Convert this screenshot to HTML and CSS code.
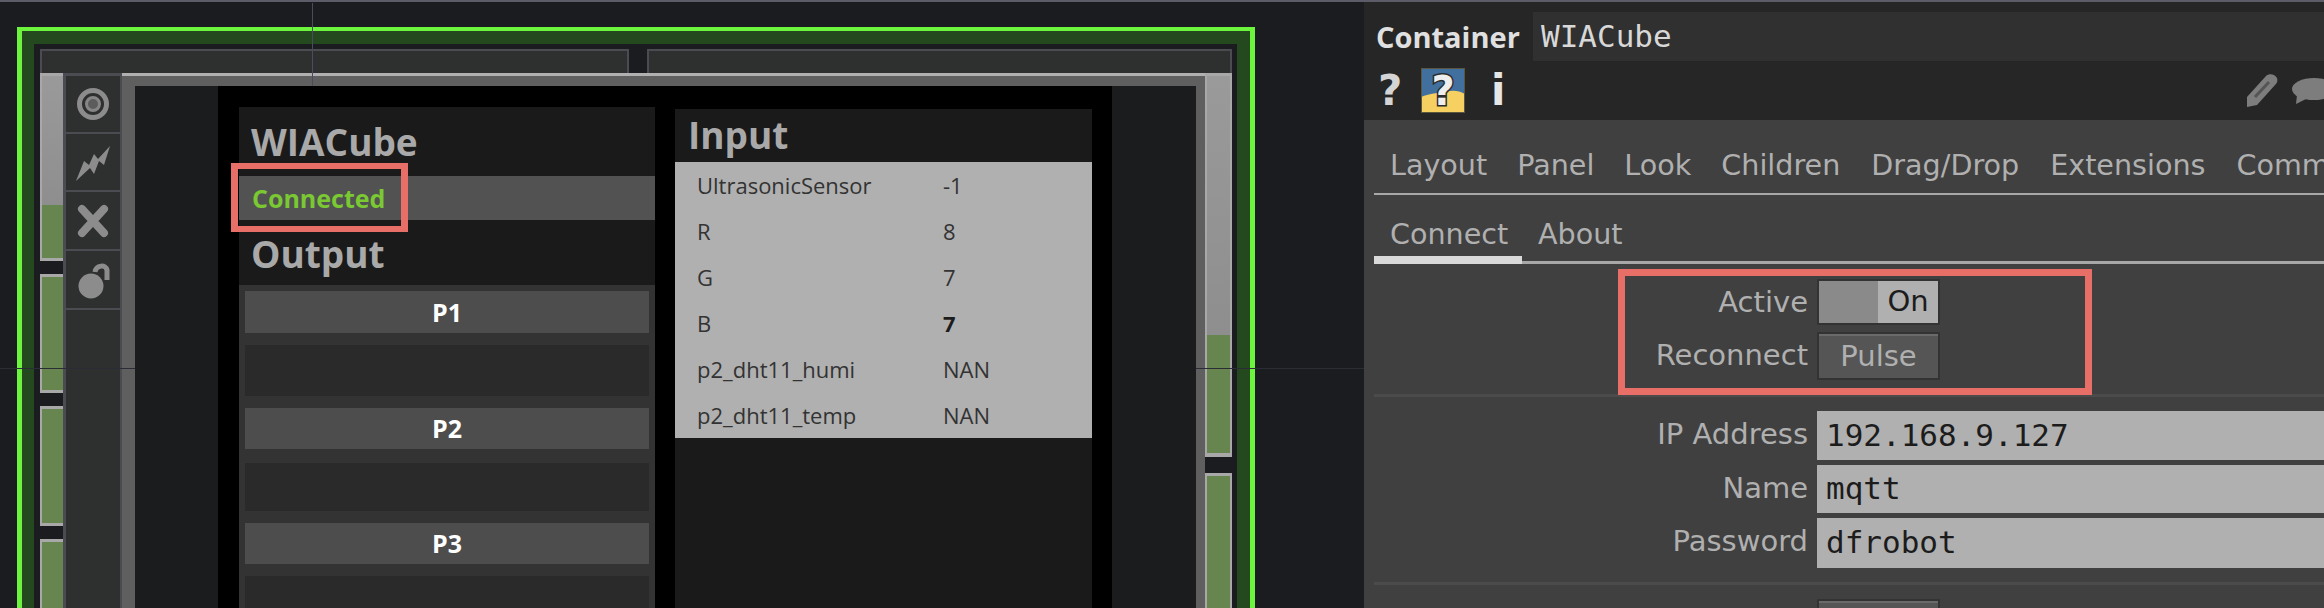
FILE: index.html
```html
<!DOCTYPE html>
<html>
<head>
    <meta charset="utf-8">
    <link rel="stylesheet" href="styles.css">
</head>
<body>
    <div class="page">
        <div class="canvas">
            <div class="frame">
                <div class="frame-inner">
                    <div class="top-row">
                        <div class="top-box top-box-left"></div>
                        <div class="top-box"></div>
                    </div>
                    <div class="main-row">
                        <div class="strip strip-left">
                            <div class="seg seg-first">
                                <div class="seg-grey"></div>
                                <div class="seg-green"></div>
                            </div>
                            <div class="seg seg-second"><div class="seg-green"></div></div>
                            <div class="seg seg-third"><div class="seg-green"></div></div>
                            <div class="seg seg-last"><div class="seg-green"></div></div>
                        </div>

                        <div class="tool-col">
                            <div class="tool tool-a">
                                <svg width="40" height="40" viewBox="0 0 40 40">
                                    <circle cx="20" cy="20" r="13.5" fill="none" stroke="#8c8c8c" stroke-width="5"/>
                                    <circle cx="20" cy="20" r="6.5" fill="#5c5c5c" stroke="#868686" stroke-width="3"/>
                                </svg>
                            </div>
                            <div class="tool tool-a">
                                <svg width="40" height="40" viewBox="0 0 40 40">
                                    <path d="M37 4 L31 23 L26 19 L21 32 L17 26 L3 39 L11 19 L16 23 L21 12 L25 17 Z" fill="#8c8c8c"/>
                                </svg>
                            </div>
                            <div class="tool tool-b">
                                <svg width="40" height="40" viewBox="0 0 40 40">
                                    <path d="M9 8 L31 32 M31 8 L9 32" fill="none" stroke="#8c8c8c" stroke-width="8" stroke-linecap="round"/>
                                </svg>
                            </div>
                            <div class="tool tool-b">
                                <svg width="40" height="40" viewBox="0 0 40 40">
                                    <circle cx="18" cy="26" r="12.5" fill="#8c8c8c"/>
                                    <path d="M22 12 C23 5 33 4 34 10 L34 20" fill="none" stroke="#8c8c8c" stroke-width="5"/>
                                </svg>
                            </div>
                            <div class="tool tool-rest"></div>
                        </div>

                        <div class="viewer">
                            <div class="viewer-inner">
                                <div class="stage">
                                    <div class="panel">
                                        <div class="panel-title title-main">WIACube</div>
                                        <div class="status">
                                            <span class="status-text">Connected</span>
                                            <div class="mark mark-status"></div>
                                        </div>
                                        <div class="panel-title title-output">Output</div>
                                        <div class="ports">
                                            <div class="port-btn port-btn-tall">P1</div>
                                            <div class="port-slot"></div>
                                            <div class="port-btn">P2</div>
                                            <div class="port-slot port-slot-short"></div>
                                            <div class="port-btn">P3</div>
                                            <div class="port-slot"></div>
                                        </div>
                                    </div>
                                    <div class="panel panel-input">
                                        <div class="panel-title title-input">Input</div>
                                        <div class="table">
                                            <div class="table-row"><span class="cell-name">UltrasonicSensor</span><span>-1</span></div>
                                            <div class="table-row"><span class="cell-name">R</span><span>8</span></div>
                                            <div class="table-row"><span class="cell-name">G</span><span>7</span></div>
                                            <div class="table-row"><span class="cell-name">B</span><span class="cell-strong">7</span></div>
                                            <div class="table-row"><span class="cell-name">p2_dht11_humi</span><span>NAN</span></div>
                                            <div class="table-row"><span class="cell-name">p2_dht11_temp</span><span>NAN</span></div>
                                        </div>
                                    </div>
                                </div>
                            </div>
                        </div>

                        <div class="strip strip-right">
                            <div class="seg seg-right-first">
                                <div class="seg-grey"></div>
                                <div class="seg-green"></div>
                            </div>
                            <div class="seg seg-right-last">
                                <div class="seg-green"></div>
                                <div class="seg-purple"></div>
                            </div>
                        </div>
                    </div>
                </div>
            </div>
            <div class="guide guide-v"></div>
            <div class="guide guide-h-left"></div>
            <div class="guide guide-h-right"></div>
        </div>

        <div class="params">
            <div class="params-head">
                <div class="head-row">
                    <span class="op-type">Container</span>
                    <span class="op-name">WIACube</span>
                </div>
                <div class="icon-row">
                    <div class="icon-group">
                        <span class="help-mark">?</span>
                        <svg class="py-icon" width="44" height="45" viewBox="0 0 44 45">
                            <rect width="44" height="45" fill="#f6d060"/>
                            <path d="M0 0 H44 V26 C34 20 26 24 16 25 C9 26 4 27 0 29 Z" fill="#41709f"/>
                            <rect x=".5" y=".5" width="43" height="44" fill="none" stroke="#5a5640"/>
                            <text x="22" y="37" text-anchor="middle" class="py-mark">?</text>
                        </svg>
                        <span class="info-mark">i</span>
                    </div>
                    <div class="icon-group icon-group-right">
                        <svg width="32" height="35" viewBox="0 0 32 35">
                            <path d="M1 24 L20 3 C23 0 29 1 31 5 C32 8 31 10 29 12 L11 32 L1 34 Z" fill="#7d7d7d"/>
                            <path d="M9 24 L23 9" stroke="#555" stroke-width="3"/>
                        </svg>
                        <svg width="32" height="28" viewBox="0 0 32 28">
                            <ellipse cx="22" cy="12" rx="22" ry="11" fill="#7d7d7d"/>
                            <path d="M5 18 L4 27 L16 21 Z" fill="#7d7d7d"/>
                        </svg>
                    </div>
                </div>
            </div>

            <div class="tabs tabs-main">
                <span>Layout</span>
                <span>Panel</span>
                <span>Look</span>
                <span>Children</span>
                <span>Drag/Drop</span>
                <span>Extensions</span>
                <span>Common</span>
            </div>
            <div class="tabs tabs-sub">
                <span class="tab-on">Connect</span>
                <span>About</span>
            </div>

            <div class="section section-first">
                <div class="mark mark-params"></div>
                <div class="param">
                    <span class="param-label">Active</span>
                    <div class="toggle"><span class="toggle-off"></span><span class="toggle-on">On</span></div>
                </div>
                <div class="param param-pulse">
                    <span class="param-label">Reconnect</span>
                    <div class="pulse">Pulse</div>
                </div>
            </div>

            <div class="section section-fields">
                <div class="param">
                    <span class="param-label">IP Address</span>
                    <div class="field field-a">192.168.9.127</div>
                </div>
                <div class="param">
                    <span class="param-label">Name</span>
                    <div class="field field-b">mqtt</div>
                </div>
                <div class="param">
                    <span class="param-label">Password</span>
                    <div class="field field-c">dfrobot</div>
                </div>
            </div>

            <div class="section section-last">
                <div class="param">
                    <span class="param-label"></span>
                    <div class="pulse"></div>
                </div>
            </div>
        </div>
    </div>
</body>
</html>
```

FILE: styles.css
```css
html, body {
    margin: 0;
    height: 608px;
    overflow: hidden;
    background: #1a1c20;
}

.page {
    display: flex;
    height: 606px;
    border-top: 2px solid #5c5c68;
    overflow: hidden;
}

/* left side, network canvas */
.canvas {
    position: relative;
    flex: none;
    width: 1364px;
    box-sizing: border-box;
    padding: 25px 0 0 17px;
    background: #1a1c20;
}

.frame {
    width: 1238px;
    box-sizing: border-box;
    border: solid #6df43d;
    border-width: 4px 5px 0;
}

.frame-inner {
    height: 620px;
    box-sizing: border-box;
    border: solid #24491f;
    border-width: 13px 13px 0 12px;
    padding: 5px 5px 0 6px;
    background: #1a1c20;
}

.top-row {
    display: flex;
    gap: 18px;
    height: 24px;
}

.top-box {
    flex: 1;
    box-sizing: border-box;
    border: solid #4b4c52;
    border-width: 2px 2px 0;
    background: #2e2f2f;
}

.top-box-left {
    flex: none;
    width: 589px;
}

.main-row {
    display: flex;
    height: 560px;
}

.strip {
    display: flex;
    flex-direction: column;
    flex: none;
}

.strip-left {
    width: 23px;
    gap: 13px;
}

.strip-right {
    width: 27px;
    gap: 16px;
}

.seg {
    display: flex;
    flex-direction: column;
    box-sizing: border-box;
    flex: none;
    border: solid #a8a8a8;
    border-width: 3px 0 3px 2px;
}

.strip-right .seg {
    border-width: 3px 2px 4px 2px;
}

.seg-first { height: 188px; }
.seg-second { height: 119px; }
.seg-third { height: 120px; }
.seg-last { height: 90px; }
.seg-right-first { height: 384px; }
.seg-right-last { height: 150px; border-bottom: 0 !important; }

.seg-grey {
    height: 129px;
    flex: none;
    background: linear-gradient(#9a9a9a, #8e8e8e);
}

.seg-right-first .seg-grey {
    height: 259px;
}

.seg-green {
    flex: 1;
    background: #67864f;
}

.seg-purple {
    height: 11px;
    flex: none;
    background: #835a7a;
}

.tool-col {
    display: flex;
    flex-direction: column;
    flex: none;
    width: 59px;
    box-sizing: border-box;
    gap: 2px;
    padding: 3px 2px 0 3px;
    background: #4b4c52;
}

.tool {
    display: flex;
    align-items: center;
    justify-content: center;
    flex: none;
    background: #2e2f2f;
}

.tool svg {
    filter: blur(0.6px);
}

.tool-a { height: 56px; }
.tool-b { height: 57px; }
.tool-rest { flex: 1; }

.viewer {
    flex: none;
    width: 1083px;
    box-sizing: border-box;
    border-top: 3px solid #b0b0b0;
    padding: 10px 9px 0 13px;
    background: #5f5f5f;
}

.viewer-inner {
    height: 100%;
    padding: 0 84px 0 83px;
    background: #1a1c1e;
}

.stage {
    display: flex;
    gap: 20px;
    height: 100%;
    box-sizing: border-box;
    padding: 21px 20px 0 21px;
    background: #000;
}

.panel {
    display: flex;
    flex-direction: column;
    flex: none;
    width: 416px;
    background: #1a1a1a;
}

.panel-input {
    width: 417px;
    margin-top: 2px;
}

.panel-title {
    box-sizing: border-box;
    padding-left: 12px;
    font-family: "Open Sans", sans-serif;
    font-weight: 700;
    font-size: 37px;
    line-height: 50px;
    color: #a9a9a9;
}

.title-main {
    height: 70px;
    padding-top: 10px;
}

.title-output {
    height: 66px;
    padding-top: 9px;
}

.title-input {
    height: 53px;
    padding-left: 13px;
    padding-top: 1px;
}

.status {
    position: relative;
    display: flex;
    align-items: center;
    height: 44px;
    padding-left: 13px;
    background: #525252;
}

.status-text {
    font-family: "Open Sans", sans-serif;
    font-weight: 700;
    font-size: 25px;
    color: #7ac832;
}

.mark {
    position: absolute;
    box-sizing: border-box;
    border: 7px solid #e86f68;
    border-width: 6px 7px;
}

.mark-status {
    left: -8px;
    top: -13px;
    width: 177px;
    height: 69px;
}

.ports {
    display: flex;
    flex-direction: column;
    gap: 12px;
    flex: 1;
    padding: 6px;
    background: #333;
}

.port-btn {
    height: 41px;
    flex: none;
    font-family: "Open Sans", sans-serif;
    font-weight: 700;
    font-size: 25px;
    line-height: 41px;
    text-align: center;
    color: #fff;
    background: #4d4d4d;
}

.port-btn-tall {
    height: 42px;
    line-height: 42px;
}

.port-slot {
    height: 51px;
    flex: none;
    background: #2a2a2a;
}

.port-slot-short {
    height: 48px;
    margin-top: 2px;
}

.table {
    display: flex;
    flex-direction: column;
    background: #b0b0b0;
}

.table-row {
    display: flex;
    height: 46px;
    align-items: center;
    padding-left: 22px;
    font-family: "Open Sans", sans-serif;
    font-size: 22px;
    color: #333;
}

.cell-name {
    width: 246px;
}

.cell-strong {
    font-weight: 700;
    color: #1c1c1c;
}

/* faint network grid */
.guide {
    position: absolute;
    background: #2a2c36;
}

.guide-v {
    left: 312px;
    top: 1px;
    width: 1px;
    height: 83px;
    background: #4a4a60;
}

.guide-h-left {
    left: 0;
    top: 366px;
    width: 135px;
    height: 1px;
}

.guide-h-right {
    left: 1196px;
    top: 366px;
    width: 168px;
    height: 1px;
}

/* right side, parameter dialog */
.params {
    flex: 1;
    min-width: 0;
    background: #404040;
    font-family: "DejaVu Sans", sans-serif;
    color: #b0b0b0;
}

.params-head {
    height: 118px;
    background: #262626;
}

.head-row {
    display: flex;
    align-items: center;
    gap: 17px;
    padding: 10px 0 0 12px;
}

.op-type {
    width: 140px;
    font-family: "Open Sans", sans-serif;
    font-weight: 700;
    font-size: 29px;
    white-space: nowrap;
    color: #e0e0e0;
}

.op-name {
    flex: 1;
    height: 49px;
    padding-left: 8px;
    background: #303030;
    font-family: "DejaVu Sans Mono", monospace;
    font-size: 31px;
    line-height: 49px;
    color: #d8d8d8;
}

.icon-row {
    display: flex;
    justify-content: space-between;
    align-items: center;
    height: 59px;
    padding-left: 14px;
}

.icon-group {
    display: flex;
    align-items: center;
}

.icon-group-right {
    gap: 14px;
}

.help-mark {
    width: 43px;
    font-weight: 700;
    font-size: 42px;
    color: #d4d4d4;
}

.info-mark {
    margin-left: 26px;
    font-weight: 700;
    font-size: 42px;
    color: #e6e6e6;
}

.py-mark {
    font-family: "DejaVu Sans", sans-serif;
    font-weight: 700;
    font-size: 40px;
    fill: #eee;
    stroke: #2c2c2c;
    stroke-width: 3px;
    paint-order: stroke;
}

.tabs {
    display: flex;
    margin-left: 10px;
    font-size: 28.6px;
    white-space: nowrap;
    overflow: hidden;
}

.tabs-main {
    gap: 30px;
    height: 75px;
    box-sizing: border-box;
    padding: 26px 0 0 16px;
    line-height: 38px;
    border-bottom: 2px solid #a8a8a8;
}

.tabs-main span:nth-child(n+5) {
    margin-left: 1px;
}

.tabs-sub {
    align-items: flex-start;
    height: 69px;
    box-sizing: border-box;
    border-bottom: 3px solid #a8a8a8;
    line-height: 38px;
    overflow: visible;
}

.tabs-sub span {
    box-sizing: border-box;
    padding: 20px 16px 0;
}

.tabs-sub .tab-on {
    width: 148px;
    height: 69px;
    border-bottom: 8px solid #d9d9d9;
}

.section {
    position: relative;
    display: flex;
    flex-direction: column;
    box-sizing: border-box;
}

.section-first {
    height: 133px;
    padding-top: 15px;
    gap: 6px;
    margin-left: 10px;
    border-bottom: 3px solid #4b4b4b;
}

.section-fields {
    height: 188px;
    padding-top: 14px;
    gap: 5px;
    margin-left: 10px;
    border-bottom: 3px solid #4b4b4b;
}

.section-last {
    padding-top: 14px;
    margin-left: 10px;
}

.mark-params {
    left: 244px;
    top: 5px;
    width: 474px;
    height: 126px;
    border-width: 7px;
}

.param {
    display: flex;
    gap: 9px;
}

.param-label {
    flex: none;
    width: 434px;
    text-align: right;
    font-size: 29px;
    line-height: 47px;
}

.toggle {
    display: flex;
    box-sizing: border-box;
    width: 123px;
    height: 46px;
    border: 2px solid #333;
}

.toggle-off {
    width: 59px;
    background: #8a8a8a;
}

.toggle-on {
    flex: 1;
    background: #b0b0b0;
    text-align: center;
    font-size: 29px;
    line-height: 40px;
    color: #1c1c1c;
}

.pulse {
    box-sizing: border-box;
    width: 123px;
    height: 48px;
    border: 2px solid #333;
    background: #555;
    box-shadow: inset 0 2px 0 #6a6a6a;
    text-align: center;
    font-size: 29px;
    line-height: 44px;
}

.field {
    flex: 1;
    padding-left: 9px;
    background: #b0b0b0;
    font-family: "DejaVu Sans Mono", monospace;
    font-size: 31px;
    color: #1c1c1c;
}

.field-a { height: 49px; line-height: 49px; }
.field-b { height: 48px; line-height: 46px; }
.field-c { height: 50px; line-height: 48px; }
```
